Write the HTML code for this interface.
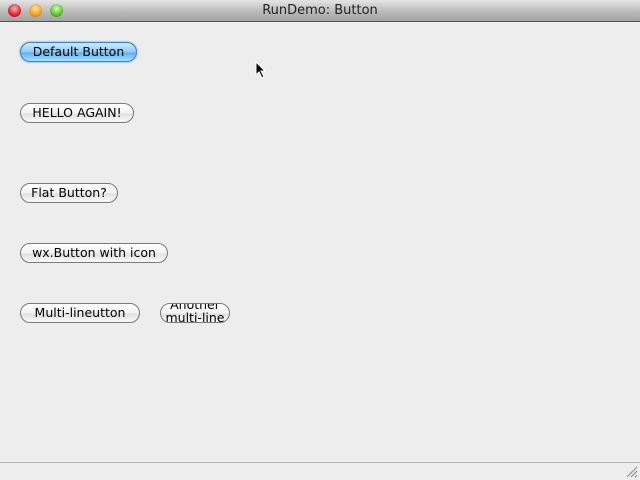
<!DOCTYPE html>
<html><head><style>
body{margin:0;width:640px;height:480px;background:#ededed;position:relative;overflow:hidden;font-family:"DejaVu Sans","Liberation Sans",sans-serif;}
.title{position:absolute;left:0;top:0;width:640px;height:21px;background:linear-gradient(#e4e4e4,#b8b8b8 60%,#a2a2a2);border-bottom:1px solid #515151;}
.title span{position:absolute;left:0;right:0;top:3px;text-align:center;font-size:13px;color:#222;}
.dot{position:absolute;top:4px;width:13px;height:13px;border-radius:50%;}
.b{position:absolute;height:18px;border:1px solid #7a7a7a;border-radius:10px;background:linear-gradient(#fff,#f2f2f2 50%,#e0e0e0 55%,#fafafa);font-size:12.5px;line-height:18px;text-align:center;color:#000;box-sizing:content-box;overflow:hidden;white-space:nowrap;}
.def{background:linear-gradient(#cfeaff,#8ecbf7 50%,#5fb0f0 55%,#aee0ff);border-color:#3f7fc6;box-shadow:0 0 2px #5a9ee0;}
.foot{position:absolute;left:0;top:462px;width:640px;border-top:1px solid #b5b5b5;}
</style></head><body>
<div class="title">
<div class="dot" style="left:8px;background:radial-gradient(circle at 50% 35%,#ffb3b3,#e0252b 60%,#8a0a0a)"></div>
<div class="dot" style="left:29px;background:radial-gradient(circle at 50% 35%,#ffe3a0,#f0a020 60%,#a05a00)"></div>
<div class="dot" style="left:50px;background:radial-gradient(circle at 50% 35%,#d0ffb0,#5cbf2a 60%,#2a6a0a)"></div>
<span>RunDemo: Button</span></div>
<div class="b def" style="left:20px;top:42px;width:115px;">Default Button</div>
<div class="b" style="left:20px;top:103px;width:112px;">HELLO AGAIN!</div>
<div class="b" style="left:20px;top:183px;width:96px;">Flat Button?</div>
<div class="b" style="left:20px;top:243px;width:146px;">wx.Button with icon</div>
<div class="b" style="left:20px;top:303px;width:118px;">Multi-lineutton</div>
<div class="b" style="left:160px;top:303px;width:68px;line-height:13px;"><div style="margin-top:-6px">Another<br>multi-line</div></div>
<svg style="position:absolute;left:255px;top:61px" width="12" height="18"><path d="M1 1 L1 14 L4 11 L7 17 L9 16 L6 10 L10 10 Z" fill="#000" stroke="#fff" stroke-width="1"/></svg>
<div class="foot"></div>
<svg style="position:absolute;left:626px;top:466px" width="12" height="12"><path d="M11 1L1 11M11 5L5 11M11 9L9 11" stroke="#888" stroke-width="1"/></svg>
</body></html>
